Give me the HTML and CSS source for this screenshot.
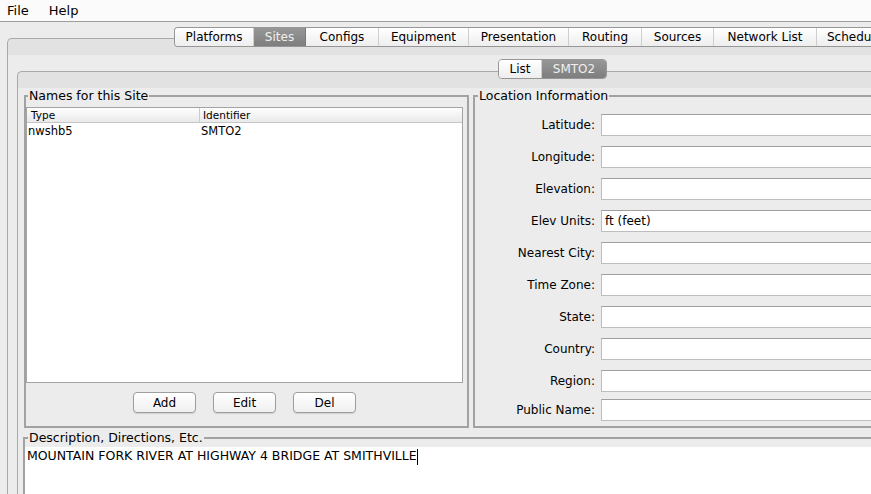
FILE: index.html
```html
<!DOCTYPE html>
<html>
<head>
<meta charset="utf-8">
<title>Sites</title>
<link rel="stylesheet" href="styles.css">
</head>
<body>
<div class="menubar"><span>File</span><span>Help</span></div>
<div class="outer">
  <div class="tabs main-tabs">
    <div class="tab t-platforms">Platforms</div>
    <div class="tab sel t-sites">Sites</div>
    <div class="tab t-configs">Configs</div>
    <div class="tab t-equipment">Equipment</div>
    <div class="tab t-presentation">Presentation</div>
    <div class="tab t-routing">Routing</div>
    <div class="tab t-sources">Sources</div>
    <div class="tab t-netlist">Network List</div>
    <div class="tab t-schedule">Schedule</div>
  </div>
  <div class="pane outer-pane">
    <div class="tabs sub-tabs">
      <div class="tab t-list">List</div>
      <div class="tab sel t-smto2">SMTO2</div>
    </div>
    <div class="pane inner-pane">
      <div class="groups">
        <fieldset class="group names">
          <legend>Names for this Site</legend>
          <div class="table">
            <div class="thead"><div class="c1">Type</div><div class="c2">Identifier</div></div>
            <div class="trow"><div class="c1">nwshb5</div><div class="c2">SMTO2</div></div>
          </div>
          <div class="buttons">
            <button class="btn">Add</button>
            <button class="btn">Edit</button>
            <button class="btn">Del</button>
          </div>
        </fieldset>
        <fieldset class="group location">
          <legend>Location Information</legend>
          <div class="form">
            <div class="frow"><label>Latitude:</label><div class="field"></div></div>
            <div class="frow"><label>Longitude:</label><div class="field"></div></div>
            <div class="frow"><label>Elevation:</label><div class="field"></div></div>
            <div class="frow"><label>Elev Units:</label><div class="field">ft (feet)</div></div>
            <div class="frow"><label>Nearest City:</label><div class="field"></div></div>
            <div class="frow"><label>Time Zone:</label><div class="field"></div></div>
            <div class="frow"><label>State:</label><div class="field"></div></div>
            <div class="frow"><label>Country:</label><div class="field"></div></div>
            <div class="frow"><label>Region:</label><div class="field"></div></div>
            <div class="frow last"><label>Public Name:</label><div class="field"></div></div>
          </div>
        </fieldset>
      </div>
      <fieldset class="group desc">
        <legend>Description, Directions, Etc.</legend>
        <div class="textarea">MOUNTAIN FORK RIVER AT HIGHWAY 4 BRIDGE AT SMITHVILLE<span class="caret"></span></div>
      </fieldset>
    </div>
  </div>
</div>
</body>
</html>
```
FILE: styles.css
```css
html, body {
  margin: 0;
  overflow: hidden;
}
body {
  width: 871px;
  height: 494px;
  background: #ececec;
  font-family: "DejaVu Sans", sans-serif;
  font-size: 12px;
  color: #000;
}

.menubar {
  height: 21px;
  border-bottom: 1px solid #9d9d9d;
  background: #fbfbfb;
  display: flex;
  gap: 20px;
  padding-left: 7px;
  font-size: 13px;
  line-height: 21px;
}

.outer {
  margin: 5px 0 0 7px;
  width: 1150px;
}

.tabs {
  display: flex;
  width: max-content;
  height: 20px;
  box-sizing: border-box;
  border: 1px solid #979797;
  border-radius: 4px 0 0 4px;
  position: relative;
  z-index: 1;
}
.main-tabs {
  margin-left: 167px;
  border-right: none;
}
.sub-tabs {
  margin-left: 481px;
  border-radius: 4px;
}
.tab {
  box-sizing: border-box;
  text-align: center;
  line-height: 18px;
  background: linear-gradient(#ffffff, #eeeeee);
  border-right: 1px solid #cfcfcf;
  white-space: nowrap;
}
.tab:first-child { border-radius: 3px 0 0 3px; }
.sub-tabs .tab:last-child { border-radius: 0 3px 3px 0; border-right: none; }
.tab.sel {
  background: linear-gradient(#979797, #7e7e7e);
  color: #f0f0f0;
  border-right-color: #7a7a7a;
}
.t-platforms { width: 79px; }
.t-sites { width: 52px; }
.t-configs { width: 73px; }
.t-equipment { width: 90px; }
.t-presentation { width: 100px; }
.t-routing { width: 73px; }
.t-sources { width: 72px; }
.t-netlist { width: 103px; }
.t-schedule { width: 90px; text-align: left; padding-left: 10px; }
.t-list { width: 43px; }
.t-smto2 { width: 64px; }

.pane {
  border: 1px solid #a9a9a9;
  border-right: none;
  border-bottom: none;
  border-radius: 5px 0 0 0;
}
.outer-pane {
  margin-top: -9px;
  padding: 20px 0 0 9px;
  background: linear-gradient(#e2e2e2 16px, #ececec 16px);
}
.inner-pane {
  margin-top: -8px;
  padding: 17px 0 0 6px;
  background: linear-gradient(#e2e2e2 16px, #ececec 16px);
}

.groups {
  display: grid;
  grid-template-columns: 445px 520px;
  column-gap: 4px;
}
.group {
  margin: 0;
  padding: 0;
  min-width: 0;
  border: 2px solid #a2a2a2;
}
.group legend {
  padding: 0 1px;
  margin-left: 2px;
  font-size: 12.5px;
  line-height: 14px;
}
.names {
  padding-bottom: 13px;
}
.location legend { margin-left: 3px; }

.table {
  margin: 4px 4px 0 0;
  height: 276px;
  box-sizing: border-box;
  border: 1px solid #a4a4a4;
  background: #fff;
}
.thead {
  display: flex;
  height: 14px;
  border-bottom: 1px solid #c6c6c6;
  background: linear-gradient(#fefefe, #e9e9e9);
  font-size: 10.5px;
  line-height: 14px;
}
.thead .c1 {
  width: 173px;
  box-sizing: border-box;
  padding-left: 4px;
  border-right: 1px solid #cccccc;
}
.thead .c2 { padding-left: 3px; }
.trow {
  display: flex;
  height: 16px;
  line-height: 16px;
  font-size: 11.5px;
}
.trow .c1 {
  width: 173px;
  box-sizing: border-box;
  padding-left: 1px;
}
.trow .c2 { padding-left: 1px; }

.buttons {
  display: flex;
  justify-content: center;
  gap: 17px;
  margin: 9px 4px 0 0;
}
.btn {
  width: 63px;
  height: 21px;
  padding: 0;
  border: 1px solid #9e9e9e;
  border-radius: 4px;
  background: linear-gradient(#ffffff, #f0f0f0);
  box-shadow: 0 1px 1px rgba(0, 0, 0, 0.12);
  font-family: "DejaVu Sans", sans-serif;
  font-size: 12px;
  color: #000;
}

.form {
  display: flex;
  flex-direction: column;
  gap: 10px;
  margin-top: 11px;
}
.frow {
  display: flex;
  align-items: center;
  gap: 6px;
  height: 22px;
}
.frow.last { margin-top: -3px; }
.frow label {
  width: 120px;
  text-align: right;
  white-space: nowrap;
}
.field {
  width: 330px;
  height: 22px;
  box-sizing: border-box;
  border: 1px solid #bdbdbd;
  border-top-color: #a0a0a0;
  background: #fff;
  padding-left: 3px;
  line-height: 20px;
}

.desc {
  margin: 3px 0 0 -1px;
  border-right: none;
  border-bottom: none;
}
.desc legend { margin-left: 3px; }
.textarea {
  margin-top: 2px;
  height: 60px;
  background: #fff;
  padding-left: 2px;
  line-height: 17px;
  font-size: 12.5px;
  white-space: nowrap;
}
.caret {
  display: inline-block;
  width: 1px;
  height: 16px;
  background: #000;
  vertical-align: middle;
}
```
